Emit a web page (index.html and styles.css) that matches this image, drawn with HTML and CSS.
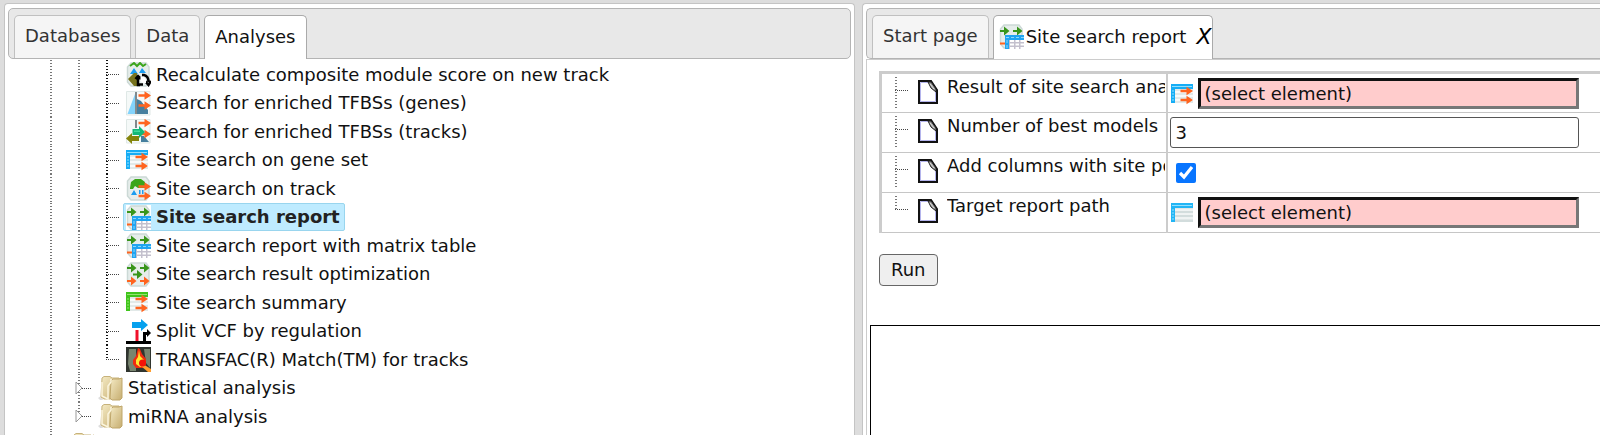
FILE: index.html
```html
<!DOCTYPE html>
<html lang="en">
<head>
<meta charset="utf-8">
<title>Site search report</title>
<link rel="stylesheet" href="styles.css">
</head>
<body>
<svg class="sprite" aria-hidden="true">
  <defs>
    <path id="arrow" d="M0 -1.2H6V-4.2L12.500 0L6 4.200V1.200H0Z"/>
    <path id="dart" d="M0 -1H4V-4.500L9.500 0L4 4.500V1H0Z"/>
    <path id="tile" d="M5 1H20L23 5V20L20 24H5L1.500 20V5Z" fill="#e6edeb" stroke="#ccd9d6" stroke-width="1.500"/>
  </defs>
  <symbol id="i-recalc" viewBox="0 0 25 25">
    <use href="#tile"/>
    <path d="M4 4L8 1L11 4L14 1L17 4L20 2" fill="none" stroke="#3ba51c" stroke-width="2"/>
    <path d="M4 12L8 6L12 12ZM13 11L16 6L20 11Z" fill="#1c9df0"/>
    <path d="M2 17L8 11H11V24H8Z" fill="#77731e"/>
    <path d="M14 23H12V15M9.500 17L12 14L15 17M13 22.500H17" fill="none" stroke="#000" stroke-width="2.500"/>
    <path d="M16 13H18Q22.500 14 22.500 20M19 19L22.500 23L25 19" fill="none" stroke="#000" stroke-width="2.500"/>
    <path d="M14.500 15H18L20 18V21H17L14.500 19Z" fill="#fff"/>
  </symbol>
  <symbol id="i-genes" viewBox="0 0 25 25">
    <path d="M.5 .5H24V24H.500Z" fill="#f5f9f8" stroke="#dfe8e6"/>
    <path d="M1.500 23L9 3V23Z" fill="#83d3fb"/>
    <path d="M11 8L15 10L22 19V23H11Z" fill="#467f9e"/>
    <path d="M9 1H11V23H9Z" fill="#818a8d"/>
    <g fill="#ff641f"><use href="#arrow" x="12.500" y="4.500"/><use href="#arrow" x="12.500" y="14.500"/></g>
  </symbol>
  <symbol id="i-tracks" viewBox="0 0 25 25">
    <path d="M.5 .5H24V24H.500Z" fill="#f5f9f8" stroke="#dfe8e6"/>
    <path d="M9 1H11V9H9Z" fill="#818a8d"/>
    <path d="M15 23V17H18L23 23Z" fill="#467f9e"/>
    <g fill="#ff641f"><use href="#arrow" x="12.500" y="4"/><use href="#arrow" x="12.500" y="15"/></g>
    <path d="M6.500 10H13V7L19 13L13 19V16H6.500Z" fill="#14b878"/>
    <path d="M8 11.500H14V13H8Z" fill="#42d99c"/>
    <path d="M0 19.500L6 14V17H13V22H6V25Z" fill="#85850c"/>
  </symbol>
  <symbol id="i-geneset" viewBox="0 0 25 25">
    <path d="M0 2H22V21H0Z" fill="#e2e9e8"/>
    <path d="M4 10H22M4 14H22M4 18H22" stroke="#fff" stroke-width="1.500"/>
    <path d="M0 2H22V7H0Z" fill="#16adf5"/>
    <path d="M0 2H4V21H0Z" fill="#16adf5"/>
    <path d="M1 4.500H21M1 9H3M1 12H3M1 15H3M1 18H3" stroke="#91e0ff"/>
    <g fill="#ff641f"><use href="#arrow" x="9.500" y="9"/><use href="#arrow" x="9.500" y="18"/></g>
  </symbol>
  <symbol id="i-table" viewBox="0 0 25 25">
    <path d="M0 2H22V21H0Z" fill="#dfe6e6"/>
    <path d="M4 9H22M4 13H22M4 17H22" stroke="#fff"/>
    <path d="M4 11H22M4 15H22M4 20H22" stroke="#c6d3d3"/>
    <path d="M0 2H22V7H4V21H0Z" fill="#22b5f5"/>
    <path d="M1 4.500H21M1 9H3M1 12H3M1 15H3M1 18H3" stroke="#91e0ff"/>
  </symbol>
  <symbol id="i-track" viewBox="0 0 25 25">
    <use href="#tile"/>
    <path d="M4 12L5 6L9 3H15L19 6V12H12L9 10L7 13H4Z" fill="#3aa51b"/>
    <path d="M5 19L8 14L11 19ZM13 14H14.500V18H13ZM16 14H17.500V18H16Z" fill="#1c9df0"/>
    <g fill="#ff641f"><use href="#arrow" x="12.500" y="10.500"/><use href="#arrow" x="12.500" y="20"/></g>
  </symbol>
  <symbol id="i-report" viewBox="0 0 25 25">
    <path d="M0 0H25V25H0Z" fill="#fff"/>
    <use href="#tile"/>
    <g fill="#38951b"><use href="#dart" x="1" y="7"/><use href="#dart" x="14" y="7"/></g>
    <path d="M1 18.500H7V20.500H1Z" fill="#ff641f"/>
    <path d="M6 11H25V25H6Z" fill="#c3c0cd"/>
    <path d="M6 11H25V16H10V25H6Z" fill="#20a4f2"/>
    <path d="M11 16H15V18H11ZM16.500 16H20V18H16.500ZM21.500 16H25V18H21.500ZM11 19.500H15V21.500H11ZM16.500 19.500H20V21.500H16.500ZM21.500 19.500H25V21.500H21.500ZM11 23H15V25H11ZM16.500 23H20V25H16.500ZM21.500 23H25V25H21.500Z" fill="#fff"/>
    <path d="M7 13.500H25M8 16V25" stroke="#8bd8fb" stroke-dasharray="3 2"/>
  </symbol>
  <symbol id="i-optim" viewBox="0 0 25 25">
    <use href="#tile"/>
    <g fill="#38951b"><use href="#dart" x="1" y="6"/><use href="#dart" x="14" y="6"/><use href="#dart" x="7" y="12.500"/></g>
    <g fill="#ff641f"><use href="#dart" x="1" y="19"/><use href="#dart" x="14" y="19"/></g>
  </symbol>
  <symbol id="i-summary" viewBox="0 0 25 25">
    <path d="M0 2H22V21H0Z" fill="#e2e9e8"/>
    <path d="M4 10H22M4 14H22M4 18H22" stroke="#fff" stroke-width="1.500"/>
    <path d="M0 2H22V7H4V21H0Z" fill="#3fc51c"/>
    <path d="M1 4.500H21M1 9H3M1 12H3M1 15H3M1 18H3" stroke="#94e36e"/>
    <g fill="#ff641f"><use href="#arrow" x="9.500" y="9"/><use href="#arrow" x="9.500" y="18"/></g>
  </symbol>
  <symbol id="i-split" viewBox="0 0 25 25">
    <path d="M6 3H15V0L22 6L15 12V9H6Z" fill="#06a1ee"/>
    <path d="M9.500 11H12.500V22H9.500Z" fill="#f0102a"/>
    <path d="M0 22H25V25H0ZM17 22V13H21V10L25 14L21 18V16H20V22Z" fill="#000"/>
  </symbol>
  <symbol id="i-flame" viewBox="0 0 25 25">
    <path d="M0 0H25V25H0Z" fill="#30352f"/>
    <path d="M3 2H10V24H4L2 17ZM18 2H24V21L20 16Z" fill="#78846f"/>
    <path d="M12 1L14 2L16 7L20 12V17L17 21H10L7 17V13L10 9Z" fill="#ef2a10"/>
    <path d="M13 3L14 9L18 13L18 18L14 20L10 17V13L12 10Z" fill="#ffe62e"/>
    <path d="M17 17L25 22V25H22L15 19Z" fill="#ff9d2d"/>
    <circle cx="16.500" cy="16" r="3.500" fill="#f41208"/>
  </symbol>
  <symbol id="i-folder" viewBox="0 0 25 25">
    <defs>
      <linearGradient id="gold" x1="0" y1="0" x2="1" y2="1">
        <stop offset="0" stop-color="#f5ebc5"/><stop offset="1" stop-color="#c6ad70"/>
      </linearGradient>
    </defs>
    <path d="M0 22L3 20L5 24H2Z" fill="#ddd"/>
    <path d="M4 2L6 .5H12L14 2H21L22 4V21L20 23H6L3 21Z" fill="url(#gold)" stroke="#c7b27b"/>
    <path d="M13 5L15 3H21L24 2V22L22 24H14L12 22Z" fill="url(#gold)" stroke="#bfa66a"/>
    <path d="M4 6V20L10 23V10L13 6V3" fill="none" stroke="#fbf5dd" stroke-width="1.500"/>
  </symbol>
  <symbol id="i-page" viewBox="0 0 20 24">
    <path d="M1 1H13L19 10V23H1Z" fill="#fff" stroke="#111" stroke-width="2"/>
    <path d="M2.500 22V2.500H11M3 21.500H17.500V11" fill="none" stroke="#b4b4ec"/>
    <path d="M10 2H13L18 9V12L13 8Z" fill="#999" stroke="#222"/>
    <path d="M12 4L16 9" stroke="#ddd"/>
  </symbol>
</svg>

<main class="app">
  <section class="pane">
    <nav class="tabs">
      <button class="tab">Databases</button>
      <button class="tab">Data</button>
      <button class="tab active">Analyses</button>
    </nav>
    <ul class="tree">
      <li class="row leaf"><i class="guide"></i><i class="guide"></i><i class="guide branch"></i><a href="#" class="item"><svg class="icon"><use href="#i-recalc"/></svg>Recalculate composite module score on new track</a></li>
      <li class="row leaf"><i class="guide"></i><i class="guide"></i><i class="guide branch"></i><a href="#" class="item"><svg class="icon"><use href="#i-genes"/></svg>Search for enriched TFBSs (genes)</a></li>
      <li class="row leaf"><i class="guide"></i><i class="guide"></i><i class="guide branch"></i><a href="#" class="item"><svg class="icon"><use href="#i-tracks"/></svg>Search for enriched TFBSs (tracks)</a></li>
      <li class="row leaf"><i class="guide"></i><i class="guide"></i><i class="guide branch"></i><a href="#" class="item"><svg class="icon"><use href="#i-geneset"/></svg>Site search on gene set</a></li>
      <li class="row leaf"><i class="guide"></i><i class="guide"></i><i class="guide branch"></i><a href="#" class="item"><svg class="icon"><use href="#i-track"/></svg>Site search on track</a></li>
      <li class="row leaf"><i class="guide"></i><i class="guide"></i><i class="guide branch"></i><a href="#" class="item selected"><svg class="icon"><use href="#i-report"/></svg>Site search report</a></li>
      <li class="row leaf"><i class="guide"></i><i class="guide"></i><i class="guide branch"></i><a href="#" class="item"><svg class="icon"><use href="#i-report"/></svg>Site search report with matrix table</a></li>
      <li class="row leaf"><i class="guide"></i><i class="guide"></i><i class="guide branch"></i><a href="#" class="item"><svg class="icon"><use href="#i-optim"/></svg>Site search result optimization</a></li>
      <li class="row leaf"><i class="guide"></i><i class="guide"></i><i class="guide branch"></i><a href="#" class="item"><svg class="icon"><use href="#i-summary"/></svg>Site search summary</a></li>
      <li class="row leaf"><i class="guide"></i><i class="guide"></i><i class="guide branch"></i><a href="#" class="item"><svg class="icon"><use href="#i-split"/></svg>Split VCF by regulation</a></li>
      <li class="row leaf"><i class="guide"></i><i class="guide"></i><i class="guide branch last"></i><a href="#" class="item"><svg class="icon"><use href="#i-flame"/></svg>TRANSFAC(R) Match(TM) for tracks</a></li>
      <li class="row"><i class="guide"></i><i class="guide branch closed"><svg class="twist" viewBox="0 0 8 14"><path d="M1 1L7 7L1 13Z"/></svg></i><a href="#" class="item"><svg class="icon"><use href="#i-folder"/></svg>Statistical analysis</a></li>
      <li class="row"><i class="guide"></i><i class="guide branch last closed"><svg class="twist" viewBox="0 0 8 14"><path d="M1 1L7 7L1 13Z"/></svg></i><a href="#" class="item"><svg class="icon"><use href="#i-folder"/></svg>miRNA analysis</a></li>
      <li class="row"><i class="guide branch"></i><a href="#" class="item" aria-label="Folder"><svg class="icon"><use href="#i-folder"/></svg></a></li>
    </ul>
  </section>

  <section class="pane work">
    <nav class="tabs">
      <button class="tab">Start page</button>
      <div class="tab active doc"><svg class="icon"><use href="#i-report"/></svg>Site search report<button class="close" aria-label="Close tab">X</button></div>
    </nav>
    <div class="content">
      <table class="props">
        <tr>
          <th><div class="name"><i class="guide branch"></i><svg class="page"><use href="#i-page"/></svg><label for="result">Result of site search analysis</label></div></th>
          <td><div class="value"><svg class="icon"><use href="#i-geneset"/></svg><input class="field picker" id="result" type="text" value="(select element)" readonly></div></td>
        </tr>
        <tr>
          <th><div class="name"><i class="guide branch"></i><svg class="page"><use href="#i-page"/></svg><label for="models">Number of best models</label></div></th>
          <td><div class="value"><input class="field" id="models" type="text" value="3"></div></td>
        </tr>
        <tr>
          <th><div class="name"><i class="guide branch"></i><svg class="page"><use href="#i-page"/></svg><label for="columns">Add columns with site positions</label></div></th>
          <td><div class="value"><input class="check" id="columns" type="checkbox" checked></div></td>
        </tr>
        <tr>
          <th><div class="name"><i class="guide branch last"></i><svg class="page"><use href="#i-page"/></svg><label for="target">Target report path</label></div></th>
          <td><div class="value"><svg class="icon"><use href="#i-table"/></svg><input class="field picker" id="target" type="text" value="(select element)" readonly></div></td>
        </tr>
      </table>
      <button class="run">Run</button>
      <div class="log"></div>
    </div>
  </section>
</main>
</body>
</html>
```

FILE: styles.css
```css
* { box-sizing: border-box; }

body {
  margin: 0;
  background: #ddd;
  color: #111;
  font: 18px/24px Verdana, "DejaVu Sans", sans-serif;
  overflow: hidden;
}

button, input { font: inherit; color: inherit; }

.sprite { position: absolute; width: 0; height: 0; }

.app {
  display: grid;
  grid-template-columns: 851fr 738fr;
  gap: 7px;
  height: 100vh;
  padding: 3px 0 0 4px;
}

.pane {
  display: flex;
  flex-direction: column;
  min-width: 0;
  min-height: 0;
  overflow: hidden;
  padding: 4px 3px 0;
  background: #fff;
  border: 1px solid #c4c4c4;
  border-bottom: 0;
  border-radius: 4px 4px 0 0;
}

.work { padding-right: 0; border-right: 0; border-top-right-radius: 0; }

.tabs {
  display: flex;
  flex: none;
  align-items: flex-end;
  gap: 4px;
  height: 51px;
  padding: 0 5px;
  background: #e8e8e8;
  border: 1px solid #b4b4b4;
  border-radius: 5px;
}

.work .tabs { border-right: 0; border-radius: 5px 0 0 5px; }

.tab {
  display: flex;
  align-items: center;
  height: 43px;
  padding: 0 10px 2px;
  background: #f5f5f5;
  border: 1px solid #c0c0c0;
  border-bottom: 0;
  border-radius: 5px 5px 0 0;
  color: #333;
  white-space: nowrap;
}

.tab.active {
  height: 44px;
  margin-bottom: -1px;
  background: #fff;
  border-color: #aaa;
  color: #111;
}

.tab.doc { gap: 2px; padding: 0 0 2px 5px; }

.close {
  margin-left: 8px;
  padding: 0;
  background: none;
  border: 0;
  color: #000;
  font-size: 22px;
  font-style: italic;
}

.icon { flex: none; width: 25px; height: 25px; }

.tree {
  margin: 0;
  padding: 1px 0 0 42px;
  list-style: none;
}

.row { display: flex; height: 29px; }
.row:nth-child(even) { height: 28px; }

/* Dotted connector lines of the tree */
.guide {
  --dots: #777;
  position: relative;
  flex: none;
  width: 28px;
  background: repeating-linear-gradient(to bottom, var(--dots) 0 1px, transparent 1px 3px) 0 0 / 2px 100% no-repeat;
}

.guide.branch { width: 17px; }

.guide.branch::after {
  content: "";
  position: absolute;
  top: 14px;
  left: 0;
  width: 14px;
  height: 1px;
  background: repeating-linear-gradient(to right, #444 0 1px, transparent 1px 2px);
}

.leaf .guide.branch { --dots: #111; }
.guide.last { background-size: 2px 15px; }

.twist {
  position: absolute;
  z-index: 1;
  top: 7px;
  left: -3px;
  width: 8px;
  height: 14px;
  fill: #fff;
  stroke: #999;
}

.item {
  display: flex;
  align-items: center;
  gap: 5px;
  padding: 0 4px 0 2px;
  border: 1px solid transparent;
  border-radius: 2px;
  color: inherit;
  text-decoration: none;
  white-space: nowrap;
}

.selected {
  background: #beebff;
  border-color: #99d5ee;
  color: #222;
  font-weight: bold;
}

.content {
  display: flex;
  flex: 1;
  flex-direction: column;
  align-items: flex-start;
  padding: 11px 0 0 12px;
  border: 1px solid #ccc;
  border-width: 1px 0 0 1px;
}

.props {
  width: 100%;
  table-layout: fixed;
  border-collapse: collapse;
  border-top: 3px solid #ccc;
  border-left: 3px solid #ccc;
}

.props th, .props td {
  height: 40px;
  padding: 0;
  border-bottom: 1px solid #c6c6c6;
}

.props th {
  width: 286px;
  border-right: 2px solid #ccc;
  font-weight: normal;
  text-align: left;
}

.name {
  display: flex;
  height: 33px;
  padding: 0 1px 0 13px;
}

.name .guide { width: 23px; }
.name .guide.branch::after { top: 13px; }

.page { flex: none; width: 20px; height: 24px; margin: 3px 9px 0 0; }

.name label { flex: 1; height: 24px; overflow: hidden; line-height: 20px; white-space: nowrap; }

.value {
  display: flex;
  align-items: center;
  gap: 2px;
  padding: 0 21px 0 2px;
}

.value .icon { margin: 2px 0 0 1px; }

.field {
  flex: 1;
  min-width: 0;
  height: 31px;
  padding: 0 5px;
  background: #fff;
  border: 1px solid #555;
  border-radius: 3px;
}

.picker {
  padding: 0 4px;
  background: #fcc;
  border: 3px solid;
  border-color: #111 #777 #777 #111;
  border-radius: 0;
}

.check {
  width: 20px;
  height: 20px;
  margin: 0 0 0 6px;
  accent-color: #0875ff;
}

.run {
  height: 32px;
  margin-top: 21px;
  padding: 0 11px;
  background: #efefef;
  border: 1px solid #666;
  border-radius: 4px;
}

.log {
  flex: 1;
  align-self: stretch;
  margin: 39px 0 0 -9px;
  border: 1px solid #000;
  border-width: 1px 0 0 1px;
}
```
